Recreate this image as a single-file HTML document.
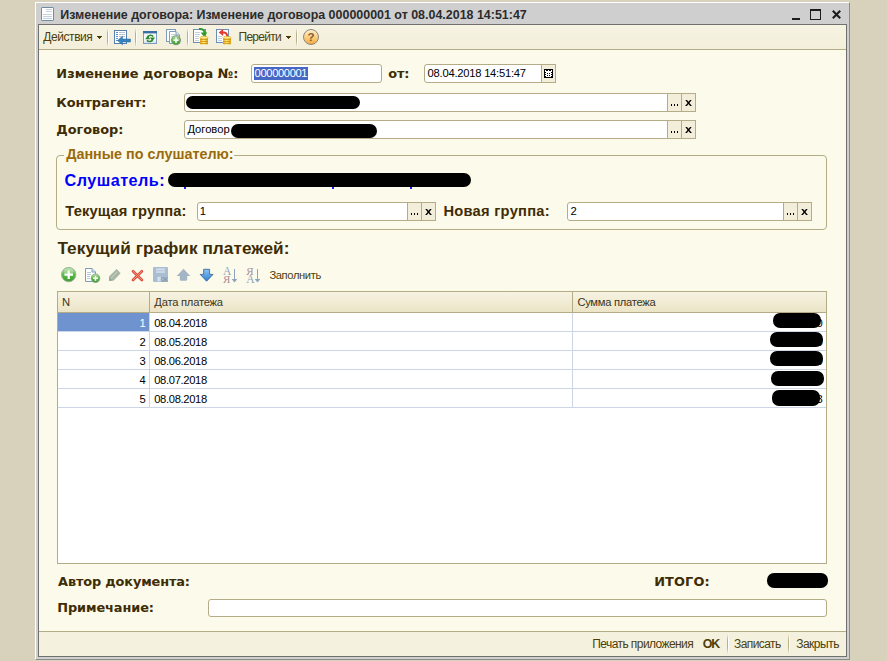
<!DOCTYPE html>
<html lang="ru">
<head>
<meta charset="utf-8">
<title>Изменение договора</title>
<style>
html,body{margin:0;padding:0;}
body{width:887px;height:661px;overflow:hidden;background:#d8d2bd;position:relative;font-family:"Liberation Sans",sans-serif;font-size:11px;color:#000;}
.a{position:absolute;white-space:nowrap;line-height:1;}
.title{font-weight:bold;color:#2b2b2b;}
.tbt{color:#4d3e0a;}
.hdr{color:#3a3420;}
.lv{font-family:"DejaVu Sans",sans-serif;font-weight:bold;color:#3e2c05;}
.la{font-weight:bold;color:#3e2c05;}
.inp{box-sizing:border-box;border:1px solid #b3ac86;background:#fff;border-radius:3px;}
.btn{box-sizing:border-box;border:1px solid #b3ac86;background:#f2eeda;}
.blob{background:#000;border-radius:7px;}
</style>
</head>
<body>

<div class="a " style="left:35px;top:2px;width:815px;height:658px;background:#cfcfcf;box-sizing:border-box;border-left:1px solid #fff;border-top:1px solid #fff;border-right:1px solid #8c8c8c;border-bottom:1px solid #8c8c8c;"></div>
<div class="a " style="left:38px;top:24px;width:809px;height:633px;box-sizing:border-box;border:1px solid #707070;background:#fcfaeb;"></div>
<div class="a " style="left:39px;top:25px;width:807px;height:24px;background:linear-gradient(#f6f3e2,#f3efda);"></div>
<div class="a " style="left:39px;top:49px;width:807px;height:1px;background:#b3ac86;"></div>
<div class="a " style="left:39px;top:631px;width:807px;height:1px;background:#b3ac86;"></div>
<div class="a " style="left:39px;top:632px;width:807px;height:24px;background:#f4f1de;"></div>
<svg class="a" style="left:0;top:0" width="887" height="661" viewBox="0 0 887 661">
<defs>
<linearGradient id="gGreen" x1="0" y1="0" x2="0" y2="1"><stop offset="0" stop-color="#b2e29e"/><stop offset="0.5" stop-color="#5fb84a"/><stop offset="1" stop-color="#3c9a2e"/></linearGradient>
<linearGradient id="gHelp" x1="0" y1="0" x2="0" y2="1"><stop offset="0" stop-color="#fdf0d2"/><stop offset="0.45" stop-color="#fbd58c"/><stop offset="1" stop-color="#f3a93a"/></linearGradient>
<linearGradient id="gSep" x1="0" y1="0" x2="0" y2="1"><stop offset="0" stop-color="#b9b08a" stop-opacity="0"/><stop offset="0.3" stop-color="#b9b08a" stop-opacity="1"/><stop offset="0.7" stop-color="#b9b08a" stop-opacity="1"/><stop offset="1" stop-color="#b9b08a" stop-opacity="0"/></linearGradient>
<linearGradient id="gSepW" x1="0" y1="0" x2="0" y2="1"><stop offset="0" stop-color="#fff" stop-opacity="0"/><stop offset="0.3" stop-color="#fff" stop-opacity="1"/><stop offset="0.7" stop-color="#fff" stop-opacity="1"/><stop offset="1" stop-color="#fff" stop-opacity="0"/></linearGradient>
<linearGradient id="gGold" x1="0" y1="0" x2="1" y2="0"><stop offset="0" stop-color="#e9a91a"/><stop offset="0.45" stop-color="#ffe77a"/><stop offset="1" stop-color="#e0a010"/></linearGradient>
<linearGradient id="gBlue" x1="0" y1="0" x2="0" y2="1"><stop offset="0" stop-color="#8cc4f4"/><stop offset="1" stop-color="#2f7fd0"/></linearGradient>
</defs>
<!-- title bar document icon -->
<rect x="41.5" y="7.5" width="12" height="13" rx="0.6" fill="#fff" stroke="#6d8ca6"/>
<g stroke="#c3d2e0" stroke-width="1" shape-rendering="crispEdges">
<line x1="46" y1="9.5" x2="52" y2="9.5"/><line x1="46" y1="11.5" x2="52" y2="11.5"/>
<line x1="43" y1="14.5" x2="52" y2="14.5"/><line x1="43" y1="16.5" x2="52" y2="16.5"/><line x1="43" y1="18.5" x2="52" y2="18.5"/>
</g>
<!-- window buttons -->
<rect x="792" y="18" width="8" height="2" fill="#1c1c1c"/>
<rect x="810.5" y="10.5" width="10" height="9" fill="none" stroke="#1c1c1c"/><rect x="810" y="9" width="11" height="2" fill="#1c1c1c"/>
<path d="M832.8 10.8 L840.2 18.2 M840.2 10.8 L832.8 18.2" stroke="#1c1c1c" stroke-width="2.1" stroke-linecap="butt" fill="none"/>
</svg>

<div class="a title" style="left:60.30px;top:9.48px;font-size:12.43px;letter-spacing:0.011px;">Изменение договора: Изменение договора 000000001 от 08.04.2018 14:51:47</div>
<div class="a tbt" style="left:43.30px;top:30.84px;font-size:12px;letter-spacing:-0.429px;">Действия</div>
<div class="a tbt" style="left:238.50px;top:30.84px;font-size:12px;letter-spacing:-0.717px;">Перейти</div>
<svg class="a" style="left:0;top:0" width="887" height="661" viewBox="0 0 887 661">
<!-- dropdown arrows -->
<path d="M97 36h5v1h-1v1h-1v1h-1v-1h-1v-1h-1z" fill="#4a3a05" shape-rendering="crispEdges"/>
<path d="M286 36h5v1h-1v1h-1v1h-1v-1h-1v-1h-1z" fill="#4a3a05" shape-rendering="crispEdges"/>
<!-- separators -->
<g shape-rendering="crispEdges">
<rect x="107" y="28" width="1" height="19" fill="url(#gSep)"/><rect x="108" y="28" width="1" height="19" fill="url(#gSepW)"/>
<rect x="135" y="28" width="1" height="19" fill="url(#gSep)"/><rect x="136" y="28" width="1" height="19" fill="url(#gSepW)"/>
<rect x="187" y="28" width="1" height="19" fill="url(#gSep)"/><rect x="188" y="28" width="1" height="19" fill="url(#gSepW)"/>
<rect x="296" y="28" width="1" height="19" fill="url(#gSep)"/><rect x="297" y="28" width="1" height="19" fill="url(#gSepW)"/>
</g>
<!-- icon1: list doc with blue left arrow -->
<rect x="114.5" y="30.5" width="12" height="13" fill="#fff" stroke="#5a80b0"/>
<g shape-rendering="crispEdges"><rect x="116" y="32" width="2" height="1" fill="#5b8fd0"/><rect x="119" y="32" width="6" height="1" fill="#b9c4d0"/>
<rect x="116" y="34" width="2" height="1" fill="#5b8fd0"/><rect x="119" y="34" width="6" height="1" fill="#b9c4d0"/>
<rect x="116" y="36" width="2" height="1" fill="#5b8fd0"/><rect x="119" y="36" width="6" height="1" fill="#b9c4d0"/>
<rect x="116" y="38" width="2" height="1" fill="#5b8fd0"/><rect x="116" y="40" width="2" height="1" fill="#5b8fd0"/></g>
<path d="M117.5 40.5 L122.5 36.2 L122.5 39 L130.5 39 L130.5 42 L122.5 42 L122.5 44.8 Z" fill="#3583bd" stroke="#2a6aa0" stroke-width="0.5"/>
<!-- icon2: window refresh -->
<rect x="143.5" y="32.5" width="13" height="11" fill="#f4f8fc" stroke="#7c9cc0"/>
<rect x="143" y="31" width="14" height="2.4" fill="#3c6ea6"/>
<rect x="144" y="41" width="12" height="2" fill="#dbe6f2"/>
<path d="M147.6 37 A3.3 3.3 0 0 1 153.2 36.6" fill="none" stroke="#2f8a2a" stroke-width="1.7"/>
<path d="M145.2 39.2 L150.2 39.2 L147.7 35.6 Z" fill="#2f8a2a"/>
<path d="M152.6 39.6 A3.3 3.3 0 0 1 147 40.2" fill="none" stroke="#2f8a2a" stroke-width="1.7"/>
<path d="M150 37.6 L155 37.6 L152.5 41.2 Z" fill="#2f8a2a"/>
<!-- icon3: copy with plus -->
<rect x="166.5" y="29.5" width="9" height="12" fill="#fff" stroke="#7f9dbb"/>
<path d="M169.5 31.5 L176 31.5 L179.5 35 L179.5 43.5 L169.5 43.5 Z" fill="#fff" stroke="#7f9dbb"/>
<path d="M176 31.5 L176 35 L179.5 35" fill="#dfe8f2" stroke="#7f9dbb"/>
<g stroke="#c3cfdc" shape-rendering="crispEdges"><line x1="171" y1="34.5" x2="175" y2="34.5"/><line x1="171" y1="36.5" x2="174" y2="36.5"/></g>
<circle cx="176" cy="40.2" r="4.6" fill="url(#gGreen)" stroke="#7d8f80" stroke-width="0.8"/>
<path d="M173.4 40.2 H178.6 M176 37.6 V42.8" stroke="#fff" stroke-width="1.7"/>
<!-- icon4: doc + coins + green arrow -->
<rect x="193.5" y="29.5" width="12" height="13" fill="#fff" stroke="#6b8db3"/>
<g stroke="#c3cfdc" shape-rendering="crispEdges"><line x1="195" y1="32.5" x2="200" y2="32.5"/><line x1="195" y1="34.5" x2="200" y2="34.5"/><line x1="195" y1="36.5" x2="199" y2="36.5"/><line x1="195" y1="38.5" x2="199" y2="38.5"/><line x1="195" y1="40.5" x2="199" y2="40.5"/></g>
<path d="M199 29 C203 28.6 204.6 30.5 204.6 33" fill="none" stroke="#2f9a2a" stroke-width="2"/>
<path d="M200.6 32.4 L207.4 32.4 L204 36.8 Z" fill="#2f9a2a"/>
<g><rect x="200" y="37" width="8" height="7.5" rx="1.5" fill="url(#gGold)"/>
<g stroke="#c98d0c" stroke-width="0.7"><line x1="200" y1="39.5" x2="208" y2="39.5"/><line x1="200" y1="41.5" x2="208" y2="41.5"/><line x1="200" y1="43.5" x2="208" y2="43.5"/></g>
<ellipse cx="204" cy="37.6" rx="4" ry="1.4" fill="#ffe98a" stroke="#d9a21a" stroke-width="0.6"/></g>
<!-- icon5: doc + coins + red arrow -->
<rect x="216.5" y="29.5" width="12" height="13" fill="#fff" stroke="#6b8db3"/>
<g stroke="#c3cfdc" shape-rendering="crispEdges"><line x1="218" y1="36.5" x2="222" y2="36.5"/><line x1="218" y1="38.5" x2="222" y2="38.5"/><line x1="218" y1="40.5" x2="222" y2="40.5"/></g>
<path d="M222.5 32.6 C226 32 227.6 34 227 37" fill="none" stroke="#e23a2e" stroke-width="2"/>
<path d="M223.2 29 L223.2 36 L218.6 32.4 Z" fill="#e23a2e"/>
<g><rect x="223" y="37" width="8" height="7.5" rx="1.5" fill="url(#gGold)"/>
<g stroke="#c98d0c" stroke-width="0.7"><line x1="223" y1="39.5" x2="231" y2="39.5"/><line x1="223" y1="41.5" x2="231" y2="41.5"/><line x1="223" y1="43.5" x2="231" y2="43.5"/></g>
<ellipse cx="227" cy="37.6" rx="4" ry="1.4" fill="#ffe98a" stroke="#d9a21a" stroke-width="0.6"/></g>
<!-- help -->
<circle cx="311" cy="37" r="7.5" fill="url(#gHelp)" stroke="#93867c" stroke-width="1"/>
<text x="311" y="41.2" text-anchor="middle" font-family="Liberation Sans, sans-serif" font-weight="bold" font-size="11.5" fill="#8a5a34">?</text>
</svg>

<div class="a lv" style="left:56.30px;top:67.69px;font-size:12.9px;letter-spacing:0.040px;">Изменение договора №:</div>
<div class="a lv" style="left:388.20px;top:67.69px;font-size:12.9px;letter-spacing:-0.150px;">от:</div>
<div class="a lv" style="left:56.30px;top:96.79px;font-size:12.9px;letter-spacing:-0.050px;">Контрагент:</div>
<div class="a lv" style="left:56.30px;top:123.69px;font-size:12.9px;letter-spacing:-0.029px;">Договор:</div>
<div class="a inp" style="left:251px;top:64px;width:131px;height:19px;"></div>
<div class="a " style="left:254px;top:67px;width:54px;height:13px;background:#4668c5;"></div>
<div class="a " style="left:254.60px;top:68.12px;font-size:11.2px;letter-spacing:-0.375px;color:#fff;">000000001</div>
<div class="a inp" style="left:424px;top:64px;width:132px;height:19px;border-radius:3px 0 0 3px;"></div>
<div class="a btn" style="left:541px;top:64px;width:15px;height:19px;"></div>
<div class="a " style="left:427.60px;top:68.12px;font-size:11.2px;letter-spacing:-0.233px;">08.04.2018 14:51:47</div>
<svg class="a" style="left:544px;top:69px" width="9" height="9" viewBox="0 0 9 9" shape-rendering="crispEdges">
<rect x="0" y="0" width="9" height="9" fill="#000"/>
<rect x="1" y="1" width="7" height="7" fill="#fff"/>
<g fill="#000"><rect x="2" y="1" width="2" height="1"/><rect x="5" y="1" width="2" height="1"/>
<rect x="1" y="3" width="1" height="1"/><rect x="7" y="3" width="1" height="1"/>
<rect x="3" y="4" width="1" height="1"/><rect x="5" y="4" width="1" height="1"/>
<rect x="1" y="5" width="1" height="1"/><rect x="7" y="5" width="1" height="1"/>
<rect x="3" y="6" width="1" height="1"/><rect x="5" y="6" width="1" height="1"/>
<rect x="1" y="7" width="1" height="1"/><rect x="7" y="7" width="1" height="1"/></g>
</svg>

<div class="a inp" style="left:184px;top:93px;width:512px;height:19px;border-radius:3px 0 0 3px;"></div>
<div class="a btn" style="left:667px;top:93px;width:15px;height:19px;"></div>
<div class="a btn" style="left:681px;top:93px;width:15px;height:19px;"></div>
<div class="a " style="left:671px;top:104px;width:1px;height:2px;background:#000;"></div>
<div class="a " style="left:674px;top:104px;width:1px;height:2px;background:#000;"></div>
<div class="a " style="left:677px;top:104px;width:1px;height:2px;background:#000;"></div>
<svg class="a" style="left:685px;top:100px" width="7" height="6" viewBox="0 0 7 6"><path d="M0.3 0 L2 0 L3.5 1.8 L5 0 L6.7 0 L4.4 3 L6.9 6 L5.1 6 L3.5 4.1 L1.9 6 L0.1 6 L2.6 3 Z" fill="#000"/></svg>
<div class="a inp" style="left:184px;top:120px;width:512px;height:19px;border-radius:3px 0 0 3px;"></div>
<div class="a btn" style="left:667px;top:120px;width:15px;height:19px;"></div>
<div class="a btn" style="left:681px;top:120px;width:15px;height:19px;"></div>
<div class="a " style="left:671px;top:131px;width:1px;height:2px;background:#000;"></div>
<div class="a " style="left:674px;top:131px;width:1px;height:2px;background:#000;"></div>
<div class="a " style="left:677px;top:131px;width:1px;height:2px;background:#000;"></div>
<svg class="a" style="left:685px;top:127px" width="7" height="6" viewBox="0 0 7 6"><path d="M0.3 0 L2 0 L3.5 1.8 L5 0 L6.7 0 L4.4 3 L6.9 6 L5.1 6 L3.5 4.1 L1.9 6 L0.1 6 L2.6 3 Z" fill="#000"/></svg>
<div class="a blob" style="left:186px;top:96px;width:174px;height:13px;"></div>
<div class="a " style="left:187.40px;top:124.12px;font-size:11.2px;letter-spacing:0.000px;">Договор</div>
<div class="a blob" style="left:231px;top:124px;width:146px;height:14px;"></div>
<div class="a " style="left:56px;top:155px;width:771px;height:75px;box-sizing:border-box;border:1px solid #b3ac86;border-radius:4px;"></div>
<div class="a " style="left:64px;top:150px;width:170px;height:11px;background:#fcfaeb;"></div>
<div class="a " style="left:66.20px;top:146.52px;font-size:14.39px;font-weight:bold;color:#9a6a0c;">Данные по слушателю:</div>
<div class="a " style="left:64.60px;top:172.49px;font-size:16.2px;letter-spacing:0.467px;font-weight:bold;color:#0000ff;">Слушатель:</div>
<div class="a " style="left:184px;top:185px;width:2px;height:4px;background:#1a1aff;"></div>
<div class="a " style="left:332px;top:185px;width:2px;height:4px;background:#1a1aff;"></div>
<div class="a " style="left:410px;top:185px;width:2px;height:4px;background:#1a1aff;"></div>
<div class="a blob" style="left:168px;top:173px;width:303px;height:14px;border-radius:7px;"></div>
<div class="a la" style="left:65.30px;top:204.26px;font-size:14.7px;letter-spacing:0.143px;">Текущая группа:</div>
<div class="a inp" style="left:197px;top:202px;width:239px;height:19px;border-radius:3px 0 0 3px;"></div>
<div class="a btn" style="left:407px;top:202px;width:15px;height:19px;"></div>
<div class="a btn" style="left:421px;top:202px;width:15px;height:19px;"></div>
<div class="a " style="left:411px;top:213px;width:1px;height:2px;background:#000;"></div>
<div class="a " style="left:414px;top:213px;width:1px;height:2px;background:#000;"></div>
<div class="a " style="left:417px;top:213px;width:1px;height:2px;background:#000;"></div>
<svg class="a" style="left:425px;top:209px" width="7" height="6" viewBox="0 0 7 6"><path d="M0.3 0 L2 0 L3.5 1.8 L5 0 L6.7 0 L4.4 3 L6.9 6 L5.1 6 L3.5 4.1 L1.9 6 L0.1 6 L2.6 3 Z" fill="#000"/></svg>
<div class="a " style="left:199.70px;top:205.52px;font-size:11.2px;">1</div>
<div class="a la" style="left:443.40px;top:204.26px;font-size:14.7px;letter-spacing:0.267px;">Новая группа:</div>
<div class="a inp" style="left:567px;top:202px;width:245px;height:19px;border-radius:3px 0 0 3px;"></div>
<div class="a btn" style="left:783px;top:202px;width:15px;height:19px;"></div>
<div class="a btn" style="left:797px;top:202px;width:15px;height:19px;"></div>
<div class="a " style="left:787px;top:213px;width:1px;height:2px;background:#000;"></div>
<div class="a " style="left:790px;top:213px;width:1px;height:2px;background:#000;"></div>
<div class="a " style="left:793px;top:213px;width:1px;height:2px;background:#000;"></div>
<svg class="a" style="left:801px;top:209px" width="7" height="6" viewBox="0 0 7 6"><path d="M0.3 0 L2 0 L3.5 1.8 L5 0 L6.7 0 L4.4 3 L6.9 6 L5.1 6 L3.5 4.1 L1.9 6 L0.1 6 L2.6 3 Z" fill="#000"/></svg>
<div class="a " style="left:570.60px;top:205.52px;font-size:11.2px;">2</div>
<div class="a la" style="left:57.40px;top:240.41px;font-size:17.23px;letter-spacing:0.052px;">Текущий график платежей:</div>
<svg class="a" style="left:0;top:0" width="887" height="661" viewBox="0 0 887 661">
<!-- add -->
<circle cx="68.7" cy="274.6" r="7.2" fill="url(#gGreen)" stroke="#9fb59b" stroke-width="1"/>
<ellipse cx="68.7" cy="271.2" rx="5" ry="2.6" fill="#fff" opacity="0.25"/>
<path d="M64.4 274.7 H73 M68.7 270.4 V279" stroke="#fff" stroke-width="2.2"/>
<!-- add copy -->
<path d="M85.5 268.5 L92 268.5 L95.5 272 L95.5 281.5 L85.5 281.5 Z" fill="#fff" stroke="#7f9dbb"/>
<path d="M92 268.5 L92 272 L95.5 272" fill="#dfe8f2" stroke="#7f9dbb"/>
<g stroke="#b9c8d8" shape-rendering="crispEdges"><line x1="87" y1="272.5" x2="91" y2="272.5"/><line x1="87" y1="274.5" x2="91" y2="274.5"/><line x1="87" y1="276.5" x2="90" y2="276.5"/><line x1="87" y1="278.5" x2="90" y2="278.5"/></g>
<circle cx="95.5" cy="278.2" r="4.3" fill="url(#gGreen)" stroke="#8a9c8a" stroke-width="0.8"/>
<path d="M93 278.2 H98 M95.5 275.7 V280.7" stroke="#fff" stroke-width="1.6"/>
<!-- pencil (disabled) -->
<path d="M109 280.7 L109 276.6 L116.6 269 L120.6 273.2 L113.4 280.7 Z" fill="#a6b5a4"/>
<path d="M110.6 277.4 L116.8 271.2 L117.8 272.2 L111.6 278.4 Z" fill="#bccaba"/>
<path d="M109 280.7 L109 277.6 L112.2 280.7 Z" fill="#95a595"/>
<!-- delete -->
<path d="M133 271.2 L141.9 280 M141.9 271.2 L133 280" stroke="#df4f40" stroke-width="2.7" stroke-linecap="round"/>
<path d="M133.2 271.4 L141.7 279.8 M141.7 271.4 L133.2 279.8" stroke="#f29a8a" stroke-width="0.9" stroke-linecap="round"/>
<!-- save (disabled) -->
<rect x="153" y="267" width="15" height="15" rx="1" fill="#a9bdd3"/>
<rect x="156" y="268.3" width="9" height="4.6" fill="#cfdbe8"/>
<rect x="156" y="270.2" width="9" height="1" fill="#b7c8da"/>
<rect x="157.4" y="276.8" width="3.4" height="4.6" fill="#d5dfea"/>
<text x="160.8" y="281.7" font-family="Liberation Sans, sans-serif" font-weight="bold" font-size="6.5" fill="#8197b0" textLength="7.2" lengthAdjust="spacingAndGlyphs">OK</text>
<!-- up (disabled) -->
<path d="M183.5 268.8 L190.3 275.9 L187.2 275.9 L187.2 279.6 Q187.2 280.8 186 280.8 L181 280.8 Q179.8 280.8 179.8 279.6 L179.8 275.9 L176.7 275.9 Z" fill="#a4b5c6"/>
<!-- down -->
<path d="M203.6 269.3 L209.6 269.3 L209.6 274.4 L213 274.4 L206.6 281.2 L200.2 274.4 L203.6 274.4 Z" fill="url(#gBlue)" stroke="#2c5f98" stroke-width="0.8" stroke-linejoin="round"/>
<!-- sort asc -->
<text x="223" y="274.6" font-family="Liberation Serif, serif" font-size="11.5" fill="#8fa5ba">А</text>
<text x="223" y="283" font-family="Liberation Serif, serif" font-size="11" fill="#a98d99">Я</text>
<path d="M234.5 269 V281" stroke="#8fa5ba" stroke-width="1"/><path d="M231.6 279 L237.4 279 L234.5 282.6 Z" fill="#8fa5ba"/>
<!-- sort desc -->
<text x="246.2" y="274.6" font-family="Liberation Serif, serif" font-size="11" fill="#a98d99">Я</text>
<text x="246.2" y="283" font-family="Liberation Serif, serif" font-size="11.5" fill="#8fa5ba">А</text>
<path d="M257.5 269 V281" stroke="#8fa5ba" stroke-width="1"/><path d="M254.6 279 L260.4 279 L257.5 282.6 Z" fill="#8fa5ba"/>
</svg>

<div class="a tbt" style="left:269.40px;top:269.82px;font-size:11.2px;letter-spacing:-0.375px;">Заполнить</div>
<div class="a " style="left:57px;top:291px;width:770px;height:273px;box-sizing:border-box;border:1px solid #b3ac86;background:#fff;"></div>
<div class="a " style="left:58px;top:292px;width:768px;height:20px;background:linear-gradient(#f7f3e3,#ebe4c6);"></div>
<div class="a " style="left:58px;top:312px;width:768px;height:1px;background:#b3ac86;"></div>
<div class="a " style="left:149px;top:292px;width:1px;height:21px;background:#b3ac86;"></div>
<div class="a " style="left:572px;top:292px;width:1px;height:21px;background:#b3ac86;"></div>
<div class="a hdr" style="left:62.00px;top:296.72px;font-size:11.2px;">N</div>
<div class="a hdr" style="left:154.30px;top:296.72px;font-size:11.2px;letter-spacing:-0.227px;">Дата платежа</div>
<div class="a hdr" style="left:577.40px;top:296.72px;font-size:11.2px;letter-spacing:-0.283px;">Сумма платежа</div>
<div class="a " style="left:58px;top:313px;width:91px;height:18px;background:#6f93cf;"></div>
<div class="a " style="left:58px;top:331px;width:768px;height:1px;background:#cbd5e5;"></div>
<div class="a " style="left:139.60px;top:317.72px;font-size:11.2px;color:#fff;">1</div>
<div class="a " style="left:154.20px;top:317.72px;font-size:11.2px;letter-spacing:-0.333px;">08.04.2018</div>
<div class="a " style="left:58px;top:350px;width:768px;height:1px;background:#cbd5e5;"></div>
<div class="a " style="left:139.60px;top:336.72px;font-size:11.2px;">2</div>
<div class="a " style="left:154.20px;top:336.72px;font-size:11.2px;letter-spacing:-0.333px;">08.05.2018</div>
<div class="a " style="left:58px;top:369px;width:768px;height:1px;background:#cbd5e5;"></div>
<div class="a " style="left:139.60px;top:355.72px;font-size:11.2px;">3</div>
<div class="a " style="left:154.20px;top:355.72px;font-size:11.2px;letter-spacing:-0.333px;">08.06.2018</div>
<div class="a " style="left:58px;top:388px;width:768px;height:1px;background:#cbd5e5;"></div>
<div class="a " style="left:139.60px;top:374.72px;font-size:11.2px;">4</div>
<div class="a " style="left:154.20px;top:374.72px;font-size:11.2px;letter-spacing:-0.333px;">08.07.2018</div>
<div class="a " style="left:58px;top:407px;width:768px;height:1px;background:#cbd5e5;"></div>
<div class="a " style="left:139.60px;top:393.72px;font-size:11.2px;">5</div>
<div class="a " style="left:154.20px;top:393.72px;font-size:11.2px;letter-spacing:-0.333px;">08.08.2018</div>
<div class="a " style="left:149px;top:313px;width:1px;height:95px;background:#cbd5e5;"></div>
<div class="a " style="left:572px;top:313px;width:1px;height:95px;background:#cbd5e5;"></div>
<div class="a " style="left:816.60px;top:317.72px;font-size:11.2px;">0</div>
<div class="a " style="left:816.60px;top:336.72px;font-size:11.2px;">0</div>
<div class="a " style="left:816.60px;top:355.72px;font-size:11.2px;">0</div>
<div class="a " style="left:816.60px;top:374.72px;font-size:11.2px;">0</div>
<div class="a " style="left:816.60px;top:393.72px;font-size:11.2px;">3</div>
<div class="a blob" style="left:773px;top:313px;width:48px;height:15px;border-radius:7px;"></div>
<div class="a blob" style="left:770px;top:332px;width:53px;height:15px;border-radius:7px;"></div>
<div class="a blob" style="left:770px;top:351px;width:53px;height:15px;border-radius:7px;"></div>
<div class="a blob" style="left:771px;top:371px;width:53px;height:15px;border-radius:7px;"></div>
<div class="a blob" style="left:772px;top:390px;width:48px;height:16px;border-radius:7px;"></div>
<div class="a lv" style="left:58.10px;top:575.89px;font-size:12.9px;letter-spacing:-0.153px;">Автор документа:</div>
<div class="a lv" style="left:654.20px;top:575.89px;font-size:12.9px;letter-spacing:0.120px;">ИТОГО:</div>
<div class="a blob" style="left:767px;top:573px;width:61px;height:15px;border-radius:7px;"></div>
<div class="a lv" style="left:57.20px;top:601.89px;font-size:12.9px;letter-spacing:-0.090px;">Примечание:</div>
<div class="a inp" style="left:208px;top:599px;width:619px;height:18px;"></div>
<div class="a tbt" style="left:592.30px;top:637.84px;font-size:12px;letter-spacing:-0.581px;">Печать приложения</div>
<div class="a tbt" style="left:702.80px;top:637.70px;font-size:12.4px;letter-spacing:-1.200px;font-weight:bold;">OK</div>
<div class="a tbt" style="left:734.00px;top:637.84px;font-size:12px;letter-spacing:-0.571px;">Записать</div>
<div class="a tbt" style="left:796.20px;top:637.84px;font-size:12px;letter-spacing:-0.500px;">Закрыть</div>
<div class="a " style="left:727px;top:634px;width:1px;height:20px;background:linear-gradient(rgba(185,176,138,0),rgba(185,176,138,1) 30%,rgba(185,176,138,1) 70%,rgba(185,176,138,0));"></div>
<div class="a " style="left:728px;top:634px;width:1px;height:20px;background:linear-gradient(rgba(255,255,255,0),rgba(255,255,255,1) 30%,rgba(255,255,255,1) 70%,rgba(255,255,255,0));"></div>
<div class="a " style="left:788px;top:634px;width:1px;height:20px;background:linear-gradient(rgba(185,176,138,0),rgba(185,176,138,1) 30%,rgba(185,176,138,1) 70%,rgba(185,176,138,0));"></div>
<div class="a " style="left:789px;top:634px;width:1px;height:20px;background:linear-gradient(rgba(255,255,255,0),rgba(255,255,255,1) 30%,rgba(255,255,255,1) 70%,rgba(255,255,255,0));"></div>
</body>
</html>
